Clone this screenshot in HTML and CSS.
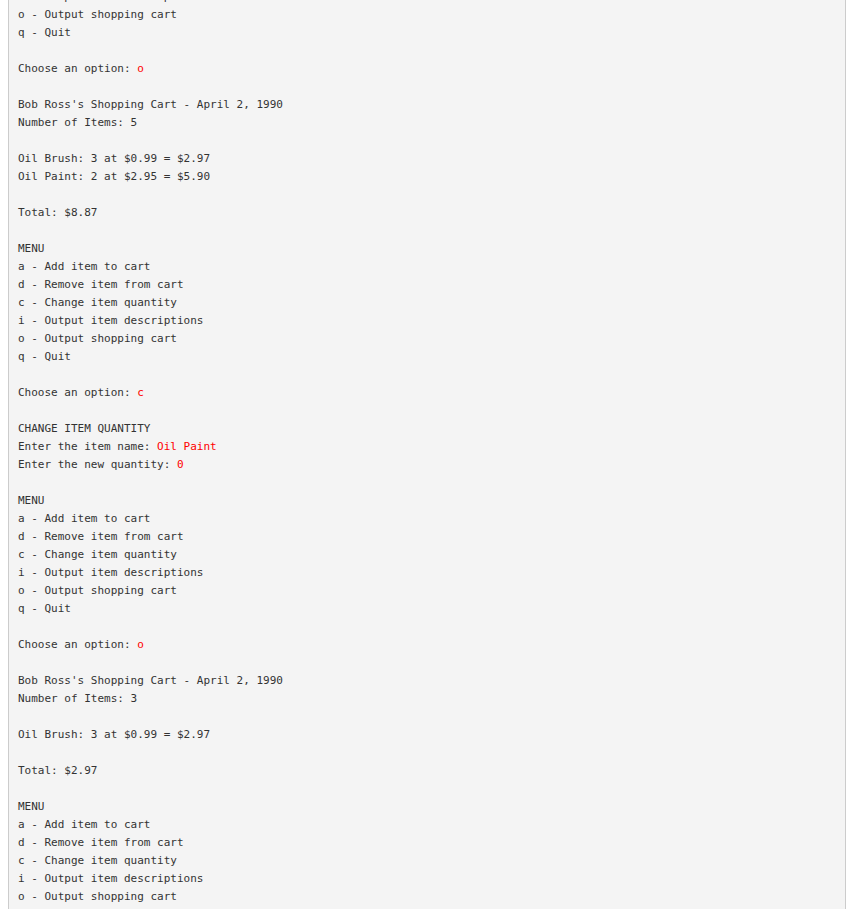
FILE: index.html
```
<!DOCTYPE html>
<html>
<head>
<meta charset="utf-8">
<link rel="stylesheet" href="styles.css">
</head>
<body>
<div class="page">
<pre class="console">i - Output item descriptions
o - Output shopping cart
q - Quit

Choose an option: <span class="in">o</span>

Bob Ross's Shopping Cart - April 2, 1990
Number of Items: 5

Oil Brush: 3 at $0.99 = $2.97
Oil Paint: 2 at $2.95 = $5.90

Total: $8.87

MENU
a - Add item to cart
d - Remove item from cart
c - Change item quantity
i - Output item descriptions
o - Output shopping cart
q - Quit

Choose an option: <span class="in">c</span>

CHANGE ITEM QUANTITY
Enter the item name: <span class="in">Oil Paint</span>
Enter the new quantity: <span class="in">0</span>

MENU
a - Add item to cart
d - Remove item from cart
c - Change item quantity
i - Output item descriptions
o - Output shopping cart
q - Quit

Choose an option: <span class="in">o</span>

Bob Ross's Shopping Cart - April 2, 1990
Number of Items: 3

Oil Brush: 3 at $0.99 = $2.97

Total: $2.97

MENU
a - Add item to cart
d - Remove item from cart
c - Change item quantity
i - Output item descriptions
o - Output shopping cart
q - Quit
</pre>
</div>
</body>
</html>
```

FILE: styles.css
```
html, body {
  margin: 0;
  padding: 0;
  background: #ffffff;
  overflow: hidden;
}
.page {
  padding-left: 8px;
  width: 838px;
  height: 909px;
  overflow: hidden;
}
.console {
  margin: -12px 0 0 0;
  padding: 0 9px;
  background: #f4f4f4;
  border-left: 1px solid #cccccc;
  border-right: 1px solid #cccccc;
  font-family: "DejaVu Sans Mono", monospace;
  font-size: 11px;
  line-height: 18px;
  color: #333333;
  white-space: pre;
}
.in {
  color: #ff0000;
}
```
